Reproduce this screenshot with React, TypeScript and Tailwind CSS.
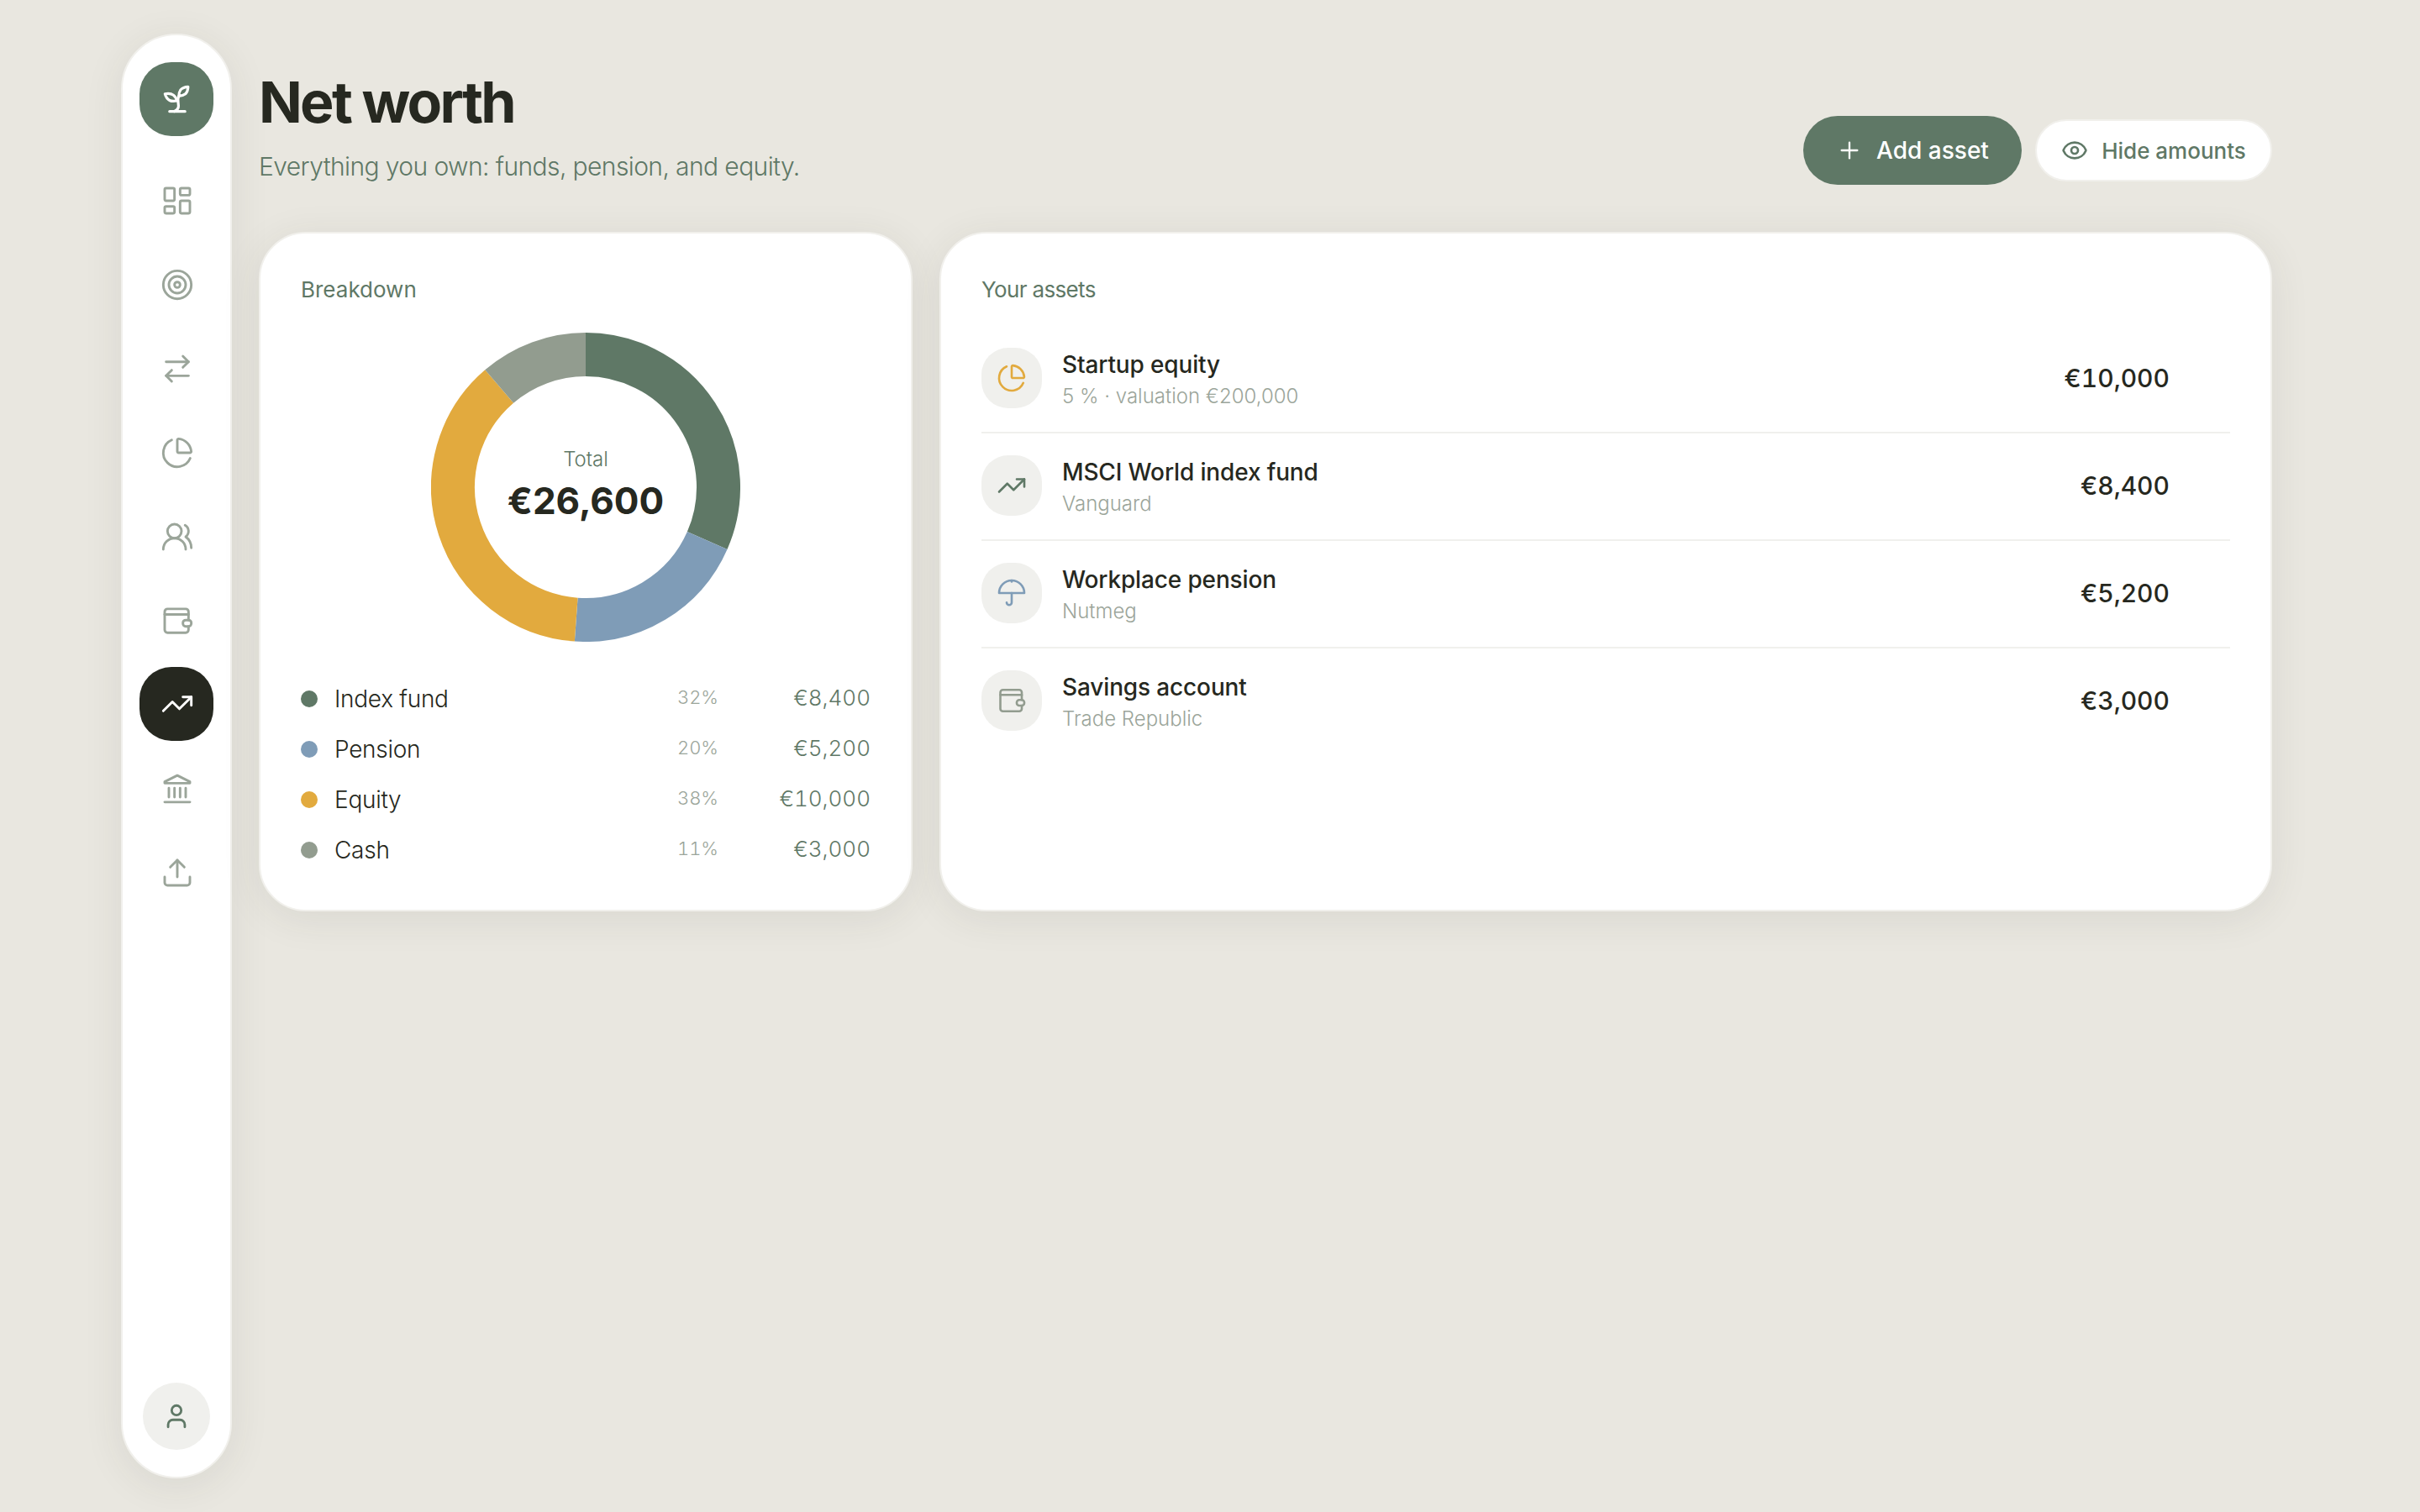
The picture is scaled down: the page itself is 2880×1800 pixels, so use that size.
import { ArrowRightLeft, ChartPie, Eye, LayoutDashboard, Plus, Target, TrendingUp, Upload, User, UsersRound } from "lucide-react";

const font = "font-['Inter','Liberation_Sans',sans-serif]";

function Sprout({ className }: { className?: string }) {
  return (
    <svg viewBox="0 0 24 24" fill="none" stroke="currentColor" strokeWidth="1.75" strokeLinecap="round" strokeLinejoin="round" className={className}>
      <path d="M7 20h10" />
      <path d="M10 20c5.5-2.5.8-6.4 3-10" />
      <path d="M9.5 9.4c1.1.8 1.8 2.2 2.3 3.7-2 .4-3.5.4-4.8-.3-1.2-.6-2.3-1.9-3-4.2 2.8-.5 4.4 0 5.5.8z" />
      <path d="M14.1 6a7 7 0 0 0-1.1 4c1.9-.1 3.3-.6 4.3-1.4 1-1 1.6-2.3 1.7-4.6-2.7.1-4 1-4.9 2z" />
    </svg>
  );
}

function Wallet({ className }: { className?: string }) {
  return (
    <svg viewBox="0 0 24 24" fill="none" stroke="currentColor" strokeWidth="1.75" strokeLinecap="round" strokeLinejoin="round" className={className}>
      <path d="M20 11.5V5.5a2 2 0 0 0-2-2H5a2 2 0 0 0-2 2v13a2 2 0 0 0 2 2h13a2 2 0 0 0 2-2v-2.5" />
      <path d="M3 7.5h17" />
      <rect x="16" y="11.5" width="6" height="4.5" rx="2" />
    </svg>
  );
}

function Bank({ className }: { className?: string }) {
  return (
    <svg viewBox="0 0 24 24" fill="none" stroke="currentColor" strokeWidth="1.75" strokeLinecap="round" strokeLinejoin="round" className={className}>
      <path d="M12 2.5 21 7v1H3V7z" />
      <path d="M6 11.5v6.5M10 11.5v6.5M14 11.5v6.5M18 11.5v6.5" />
      <path d="M3 21.5h18" />
    </svg>
  );
}

function Umbrella({ className }: { className?: string }) {
  return (
    <svg viewBox="0 0 24 24" fill="none" stroke="currentColor" strokeWidth="1.75" strokeLinecap="round" strokeLinejoin="round" className={className}>
      <path d="M2 12a10 10 0 0 1 20 0z" />
      <path d="M12 12v7.5a2 2 0 0 1-4 0" />
      <path d="M12 2v1" />
    </svg>
  );
}

// donut segments, degrees clockwise from the top
function arc(start: number, end: number) {
  const r = 158;
  const pt = (a: number) => {
    const rad = ((a - 90) * Math.PI) / 180;
    return `${184 + r * Math.cos(rad)} ${184 + r * Math.sin(rad)}`;
  };
  return `M${pt(start)}A${r} ${r} 0 ${end - start > 180 ? 1 : 0} 1 ${pt(end)}`;
}

const legend = [
  { label: "Index fund", pct: "32%", value: "€8,400", dot: "bg-[#5f7866]" },
  { label: "Pension", pct: "20%", value: "€5,200", dot: "bg-[#7f9cb7]" },
  { label: "Equity", pct: "38%", value: "€10,000", dot: "bg-[#e2aa3e]" },
  { label: "Cash", pct: "11%", value: "€3,000", dot: "bg-[#929c8f]" },
];

const assets = [
  { name: "Startup equity", sub: "5 % · valuation €200,000", value: "€10,000", icon: <ChartPie className="h-[36px] w-[36px] text-[#e2aa3e]" strokeWidth={1.75} /> },
  { name: "MSCI World index fund", sub: "Vanguard", value: "€8,400", icon: <TrendingUp className="h-[36px] w-[36px] text-[#5f7866]" strokeWidth={1.75} /> },
  { name: "Workplace pension", sub: "Nutmeg", value: "€5,200", icon: <Umbrella className="h-[36px] w-[36px] text-[#7f9cb7]" /> },
  { name: "Savings account", sub: "Trade Republic", value: "€3,000", icon: <Wallet className="h-[36px] w-[36px] text-[#929c8f]" /> },
];

const navIcon = "h-[40px] w-[40px]";

export default function App() {
  const nav = [
    <LayoutDashboard className={navIcon} strokeWidth={1.75} />,
    <Target className={navIcon} strokeWidth={1.75} />,
    <ArrowRightLeft className={navIcon} strokeWidth={1.75} />,
    <ChartPie className={navIcon} strokeWidth={1.75} />,
    <UsersRound className={navIcon} strokeWidth={1.75} />,
    <Wallet className={navIcon} />,
    <TrendingUp className={navIcon} strokeWidth={1.75} />,
    <Bank className={navIcon} />,
    <Upload className={navIcon} strokeWidth={1.75} />,
  ];

  return (
    <div className={`${font} flex h-[1800px] gap-[32px] bg-[#e9e7e0] py-[40px] pl-[144px] pr-[176px] text-[#262820]`}>
      <aside className="flex w-[132px] shrink-0 flex-col items-center rounded-[66px] border-2 border-[#f1f0ec] bg-white py-[32px] shadow-[0_8px_48px_rgba(60,55,40,0.09)]">
        <div className="mb-[32px] flex h-[88px] w-[88px] items-center justify-center rounded-[38px] bg-[#5f7866] pl-[2px] text-white">
          <Sprout className="h-[44px] w-[44px]" />
        </div>
        <nav className="flex flex-col gap-[12px]">
          {nav.map((icon, i) => (
            <div
              key={i}
              className={
                i === 6
                  ? "flex h-[88px] w-[88px] items-center justify-center rounded-[38px] bg-[#262820] pl-[2px] text-white"
                  : "flex h-[88px] w-[88px] items-center justify-center rounded-[38px] pl-[2px] pt-[1px] text-[#9ba59a]"
              }
            >
              {icon}
            </div>
          ))}
        </nav>
        <div className="mt-auto flex h-[80px] w-[80px] items-center justify-center rounded-full bg-[#f0f0ed] text-[#5f7866]">
          <User className="h-[34px] w-[34px]" strokeWidth={2} />
        </div>
      </aside>

      <main className="flex-1 pt-[42px]">
        <header className="mb-[56px] flex items-end justify-between">
          <div>
            <h1 className="text-[68px] font-bold leading-[79px] tracking-[-0.04em]">Net worth</h1>
            <p className="mt-[15px] text-[30px] font-light leading-[44px] tracking-[-0.02em] text-[#5f7866]">
              Everything you own: funds, pension, and equity.
            </p>
          </div>
          <div className="flex items-center gap-[16px]">
            <button className="flex h-[82px] w-[260px] items-center justify-center gap-[16px] rounded-full bg-[#5f7866] text-[28px] font-medium text-white">
              <Plus className="h-[32px] w-[32px]" strokeWidth={1.75} />
              Add asset
            </button>
            <button className="flex h-[74px] w-[282px] items-center justify-center gap-[16px] rounded-full border-2 border-[#f1f0ec] bg-white text-[26px] font-medium text-[#5f7866]">
              <Eye className="h-[32px] w-[32px]" strokeWidth={2} />
              Hide amounts
            </button>
          </div>
        </header>

        <div className="flex items-stretch gap-[32px]">
          <section className="w-[778px] shrink-0 rounded-[56px] border-2 border-[#f1f0ec] bg-white px-[48px] pb-[49px] pt-[49px] shadow-[0_8px_48px_rgba(60,55,40,0.09)]">
            <h2 className="text-[26px] leading-[36px] text-[#5f7866]">Breakdown</h2>
            <div className="relative mx-auto mb-[46px] mt-[33px] h-[368px] w-[368px]">
              <svg viewBox="0 0 368 368" className="h-full w-full" fill="none" strokeWidth="52">
                <path d={arc(0, 113.7)} stroke="#5f7866" />
                <path d={arc(113.7, 184.1)} stroke="#7f9cb7" />
                <path d={arc(184.1, 319.4)} stroke="#e2aa3e" />
                <path d={arc(319.4, 360)} stroke="#929c8f" />
              </svg>
              <div className="absolute inset-0 flex flex-col items-center justify-center pb-[5px]">
                <span className="mb-[5px] text-[24px] font-light leading-[32px] text-[#5f7866]">Total</span>
                <span className="text-[44px] font-bold leading-[56px]">€26,600</span>
              </div>
            </div>
            <ul className="flex flex-col gap-[16px]">
              {legend.map((row) => (
                <li key={row.label} className="flex h-[44px] items-center">
                  <span className={`h-[20px] w-[20px] rounded-full ${row.dot}`} />
                  <span className="ml-[20px] flex-1 text-[28px] font-light tracking-[-0.01em]">{row.label}</span>
                  <span className="pb-[4px] text-[22px] font-light tabular-nums text-[#9ba59a]">{row.pct}</span>
                  <span className="w-[181px] pb-[4px] text-right text-[26px] font-light tabular-nums text-[#5f7866]">{row.value}</span>
                </li>
              ))}
            </ul>
          </section>

          <section className="flex-1 rounded-[56px] border-2 border-[#f1f0ec] bg-white px-[48px] pb-[48px] pt-[49px] shadow-[0_8px_48px_rgba(60,55,40,0.09)]">
            <h2 className="text-[26px] leading-[36px] tracking-[-0.025em] text-[#5f7866]">Your assets</h2>
            <ul className="mt-[25px]">
              {assets.map((a, i) => (
                <li
                  key={a.name}
                  className={
                    i < assets.length - 1
                      ? "flex items-center gap-[24px] border-b-2 border-[#f0f0ed] pb-[28px] pt-[26px]"
                      : "flex items-center gap-[24px] pb-[28px] pt-[26px]"
                  }
                >
                  <div className="flex h-[72px] w-[72px] items-center justify-center rounded-[32px] bg-[#f0f0ed]">{a.icon}</div>
                  <div className="flex h-[72px] flex-1 flex-col justify-center pt-[5px]">
                    <p className="text-[28px] font-medium leading-[38px] tracking-[-0.005em]">{a.name}</p>
                    <p className="text-[24px] font-light leading-[38px] text-[#9ba59a]">{a.sub}</p>
                  </div>
                  <span className="mr-[72px] text-[30px] font-medium tabular-nums">{a.value}</span>
                </li>
              ))}
            </ul>
          </section>
        </div>
      </main>
    </div>
  );
}
